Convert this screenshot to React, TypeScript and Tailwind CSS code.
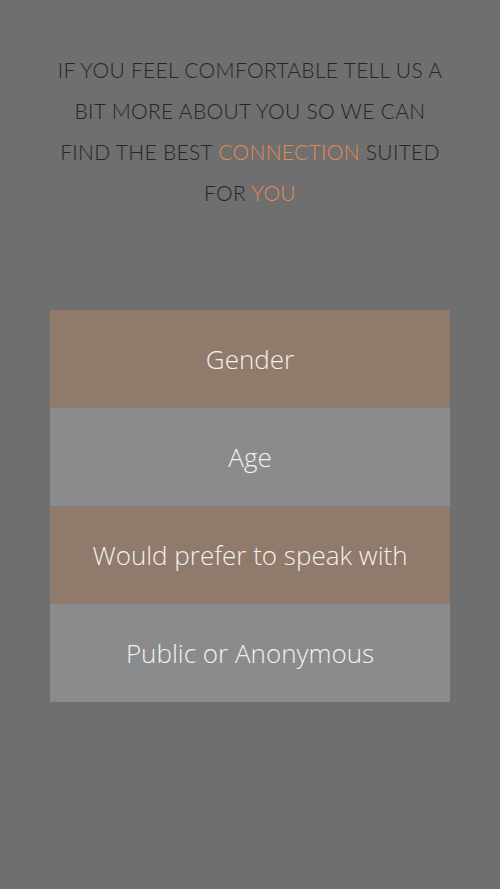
export default function App() {
  return (
    <div className="w-[500px] h-[889px] bg-[#6f6f6f] flex flex-col items-center">
      <p
        className="mt-[49px] w-[480px] text-center text-[21px] leading-[41px] tracking-[0.3px] font-light text-[#262626]"
        style={{ fontFamily: "Lato, 'Open Sans', sans-serif" }}
      >
        IF YOU FEEL COMFORTABLE TELL US A
        <br />
        BIT MORE ABOUT YOU SO WE CAN
        <br />
        FIND THE BEST <span className="text-[#e08b53]">CONNECTION</span> SUITED
        <br />
        FOR <span className="text-[#e08b53]">YOU</span>
      </p>
      <div
        className="mt-[97px] w-[400px] flex flex-col text-[#f4f0ec] text-[26px] font-light"
        style={{ fontFamily: "'Open Sans', sans-serif" }}
      >
        <div className="h-[98px] bg-[#8f7a6b] flex items-center justify-center">Gender</div>
        <div className="h-[98px] bg-[#8a8b8d] flex items-center justify-center">Age</div>
        <div className="h-[98px] bg-[#8f7a6b] flex items-center justify-center">Would prefer to speak with</div>
        <div className="h-[98px] bg-[#8a8b8d] flex items-center justify-center">Public or Anonymous</div>
      </div>
    </div>
  );
}
